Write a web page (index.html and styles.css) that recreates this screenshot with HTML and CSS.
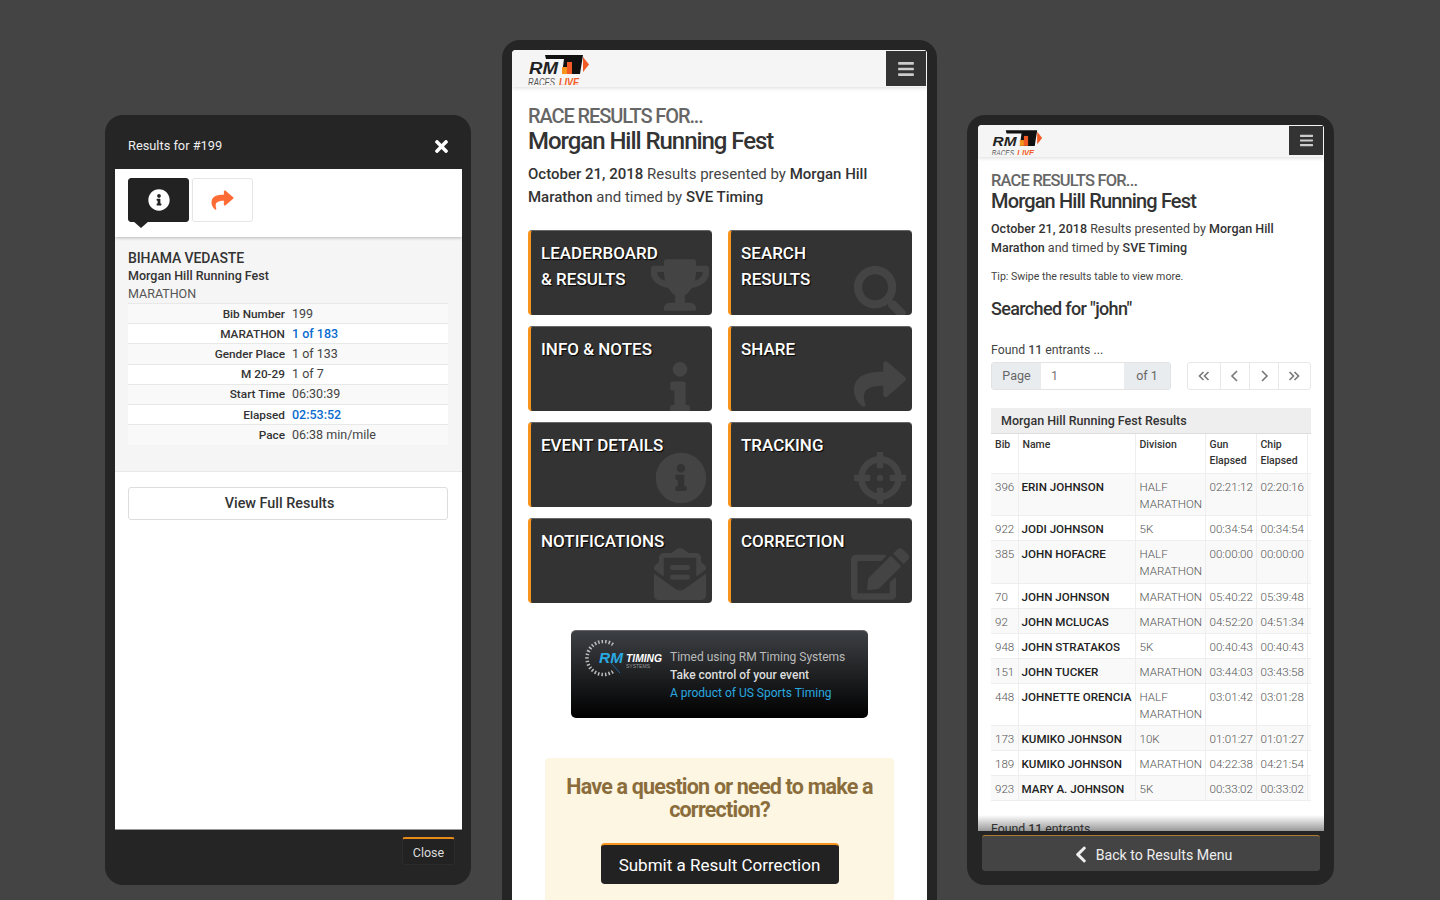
FILE: index.html
```html
<!DOCTYPE html>
<html lang="en">
<head>
  <meta charset="UTF-8" />
  <title>RM Races Live - Morgan Hill Running Fest</title>
  <link rel="stylesheet" href="styles.css">
</head>
<body>
  <svg class="sprites" aria-hidden="true">
    <symbol id="i-share" viewBox="0 0 512 512"><path d="M503.691 189.836L327.687 37.851C312.281 24.546 288 35.347 288 56.015v80.053C127.371 137.907 0 170.1 0 322.326c0 61.441 39.581 122.309 83.333 154.132 13.653 9.931 33.111-2.533 28.077-18.631C66.066 312.814 132.917 274.316 288 272.085V360c0 20.7 24.3 31.453 39.687 18.164l176.004-152c11.071-9.562 11.086-26.753 0-36.328z"/></symbol>
    <symbol id="i-circle" viewBox="0 0 512 512"><path d="M256 8C119.043 8 8 119.083 8 256c0 136.997 111.043 248 248 248s248-111.003 248-248C504 119.083 392.957 8 256 8zm0 110c23.196 0 42 18.804 42 42s-18.804 42-42 42-42-18.804-42-42 18.804-42 42-42zm56 254c0 6.627-5.373 12-12 12h-88c-6.627 0-12-5.373-12-12v-24c0-6.627 5.373-12 12-12h12v-64h-12c-6.627 0-12-5.373-12-12v-24c0-6.627 5.373-12 12-12h64c6.627 0 12 5.373 12 12v100h12c6.627 0 12 5.373 12 12v24z"/></symbol>
    <symbol id="i-info" viewBox="0 0 192 512"><path d="M20 424.229h20V279.771H20c-11.046 0-20-8.954-20-20V212c0-11.046 8.954-20 20-20h112c11.046 0 20 8.954 20 20v212.229h20c11.046 0 20 8.954 20 20V492c0 11.046-8.954 20-20 20H20c-11.046 0-20-8.954-20-20v-47.771c0-11.046 8.954-20 20-20zM96 0C56.235 0 24 32.235 24 72s32.235 72 72 72 72-32.235 72-72S135.764 0 96 0z"/></symbol>
    <symbol id="i-search" viewBox="0 0 512 512"><path d="M505 442.7L405.3 343c-4.5-4.5-10.6-7-17-7H372c27.6-35.3 44-79.7 44-128C416 93.1 322.9 0 208 0S0 93.1 0 208s93.1 208 208 208c48.3 0 92.7-16.4 128-44v16.3c0 6.4 2.5 12.5 7 17l99.7 99.7c9.4 9.4 24.6 9.4 33.9 0l28.3-28.3c9.4-9.4 9.4-24.6.1-34zM208 336c-70.7 0-128-57.2-128-128 0-70.7 57.2-128 128-128 70.7 0 128 57.2 128 128 0 70.7-57.2 128-128 128z"/></symbol>
    <symbol id="i-trophy" viewBox="0 0 576 512"><path d="M552 64H448V24c0-13.3-10.7-24-24-24H152c-13.3 0-24 10.7-24 24v40H24C10.7 64 0 74.7 0 88v56c0 35.7 22.5 72.4 61.9 100.7 31.5 22.7 69.8 37.1 110 41.7C203.3 338.5 240 360 240 360v72h-48c-35.3 0-64 20.7-64 56v12c0 6.6 5.4 12 12 12h296c6.6 0 12-5.4 12-12v-12c0-35.3-28.7-56-64-56h-48v-72s36.7-21.5 68.1-73.6c40.3-4.6 78.7-19 110-41.7 39.3-28.3 61.9-65 61.9-100.7V88c0-13.3-10.7-24-24-24zM99.3 192.8C74.9 175.2 64 155.6 64 144v-16h64.2c1 32.6 5.8 61.2 12.8 86.2-15.1-5.2-29.2-12.4-41.7-21.4zM512 144c0 16.1-17.7 36.1-35.3 48.8-12.5 9-26.7 16.2-41.8 21.4 7-25 11.8-53.6 12.8-86.2H512v16z"/></symbol>
    <symbol id="i-target" viewBox="0 0 512 512"><path d="M500 224h-30.364C455.724 130.325 381.675 56.276 288 42.364V12c0-6.627-5.373-12-12-12h-40c-6.627 0-12 5.373-12 12v30.364C130.325 56.276 56.276 130.325 42.364 224H12c-6.627 0-12 5.373-12 12v40c0 6.627 5.373 12 12 12h30.364C56.276 381.675 130.325 455.724 224 469.636V500c0 6.627 5.373 12 12 12h40c6.627 0 12-5.373 12-12v-30.364C381.675 455.724 455.724 381.675 469.636 288H500c6.627 0 12-5.373 12-12v-40c0-6.627-5.373-12-12-12zM288 404.634V364c0-6.627-5.373-12-12-12h-40c-6.627 0-12 5.373-12 12v40.634C165.826 392.232 119.783 346.243 107.366 288H148c6.627 0 12-5.373 12-12v-40c0-6.627-5.373-12-12-12h-40.634C119.768 165.826 165.757 119.783 224 107.366V148c0 6.627 5.373 12 12 12h40c6.627 0 12-5.373 12-12v-40.634C346.174 119.768 392.217 165.757 404.634 224H364c-6.627 0-12 5.373-12 12v40c0 6.627 5.373 12 12 12h40.634C392.232 346.174 346.243 392.217 288 404.634zM288 256c0 17.673-14.327 32-32 32s-32-14.327-32-32c0-17.673 14.327-32 32-32s32 14.327 32 32z"/></symbol>
    <symbol id="i-edit" viewBox="0 0 576 512"><path d="M402.6 83.2l90.2 90.2c3.8 3.8 3.8 10 0 13.8L274.4 405.6l-92.8 10.3c-12.4 1.4-22.9-9.1-21.5-21.5l10.3-92.8L388.8 83.2c3.8-3.8 10-3.8 13.8 0zm162-22.9l-48.8-48.8c-15.2-15.2-39.9-15.2-55.2 0l-35.4 35.4c-3.8 3.8-3.8 10 0 13.8l90.2 90.2c3.8 3.8 10 3.8 13.8 0l35.4-35.4c15.2-15.3 15.2-40 0-55.2zM384 346.2V448H64V128h229.8c3.2 0 6.2-1.3 8.5-3.5l40-40c7.6-7.6 2.2-20.5-8.5-20.5H48C21.5 64 0 85.5 0 112v352c0 26.5 21.5 48 48 48h352c26.5 0 48-21.5 48-48V306.2c0-10.7-12.9-16-20.5-8.5l-40 40c-2.2 2.3-3.5 5.3-3.5 8.5z"/></symbol>
    <symbol id="i-mail" viewBox="0 0 512 512"><path d="M176 216h160c8.84 0 16-7.16 16-16v-16c0-8.84-7.16-16-16-16H176c-8.84 0-16 7.16-16 16v16c0 8.84 7.16 16 16 16zm-16 80c0 8.84 7.16 16 16 16h160c8.84 0 16-7.16 16-16v-16c0-8.84-7.16-16-16-16H176c-8.84 0-16 7.16-16 16v16zm96 121.13c-16.42 0-32.84-5.06-46.86-15.19L0 250.86V464c0 26.51 21.49 48 48 48h416c26.51 0 48-21.49 48-48V250.86L302.86 401.94c-14.02 10.12-30.44 15.19-46.86 15.19zm237.61-254.18c-8.85-6.94-17.24-13.47-29.61-22.81V96c0-26.51-21.49-48-48-48h-77.55c-3.04-2.2-5.87-4.26-9.04-6.56C312.6 29.17 279.2-.35 256 0c-23.2-.35-56.59 29.17-73.41 41.44-3.17 2.3-6 4.36-9.04 6.56H96c-26.51 0-48 21.49-48 48v44.14c-12.37 9.33-20.76 15.87-29.61 22.81A47.995 47.995 0 0 0 0 200.72v10.65l96 69.35V96h320v184.72l96-69.35v-10.65c0-14.74-6.78-28.67-18.39-37.77z"/></symbol>
    <symbol id="i-bars" viewBox="0 0 448 512"><path d="M16 132h416c8.837 0 16-7.163 16-16V76c0-8.837-7.163-16-16-16H16C7.163 60 0 67.163 0 76v40c0 8.837 7.163 16 16 16zm0 160h416c8.837 0 16-7.163 16-16v-40c0-8.837-7.163-16-16-16H16c-8.837 0-16 7.163-16 16v40c0 8.837 7.163 16 16 16zm0 160h416c8.837 0 16-7.163 16-16v-40c0-8.837-7.163-16-16-16H16c-8.837 0-16 7.163-16 16v40c0 8.837 7.163 16 16 16z"/></symbol>
  </svg>

  <!-- left phone: results modal -->
  <section class="device device-modal">
    <header class="modal-head">
      <span>Results for #199</span>
      <svg class="modal-x" viewBox="0 0 352 512"><path d="M242.72 256l100.07-100.07c12.28-12.28 12.28-32.19 0-44.48l-22.24-22.24c-12.28-12.28-32.19-12.28-44.48 0L176 189.28 75.93 89.21c-12.28-12.28-32.19-12.28-44.48 0L9.21 111.45c-12.28 12.28-12.28 32.19 0 44.48L109.28 256 9.21 356.07c-12.28 12.28-12.28 32.19 0 44.48l22.24 22.24c12.28 12.28 32.2 12.28 44.48 0L176 322.72l100.07 100.07c12.28 12.28 32.2 12.28 44.48 0l22.24-22.24c12.28-12.28 12.28-32.19 0-44.48L242.72 256z"/></svg>
    </header>
    <div class="screen modal-body">
      <div class="tabs">
        <div class="tab tab-on"><svg class="tab-icon"><use href="#i-circle"/></svg></div>
        <div class="tab"><svg class="tab-icon tab-share"><use href="#i-share"/></svg></div>
      </div>
      <div class="result">
        <div class="result-name">BIHAMA VEDASTE</div>
        <div class="result-event">Morgan Hill Running Fest</div>
        <div class="result-div">MARATHON</div>
        <table class="result-table">
          <tr><th>Bib Number</th><td>199</td></tr>
          <tr><th>MARATHON</th><td class="blue">1 of 183</td></tr>
          <tr><th>Gender Place</th><td>1 of 133</td></tr>
          <tr><th>M 20-29</th><td>1 of 7</td></tr>
          <tr><th>Start Time</th><td>06:30:39</td></tr>
          <tr><th>Elapsed</th><td class="blue">02:53:52</td></tr>
          <tr><th>Pace</th><td>06:38 min/mile</td></tr>
        </table>
      </div>
      <button class="full-btn">View Full Results</button>
    </div>
    <footer class="modal-foot">
      <button class="close-btn">Close</button>
    </footer>
  </section>

  <!-- middle phone: results menu -->
  <section class="device device-menu">
    <div class="screen">
      <div class="topbar">
        <svg class="logo" viewBox="0 0 64 35">
          <polygon points="19,5 57,5 54,24 36,24 38,9 20,9" fill="#111"/>
          <rect x="36" y="17" width="5" height="7" fill="#f7941d"/>
          <rect x="41" y="12" width="5" height="12" fill="#f15a24"/>
          <polygon points="57,7 63,14.5 57,22" fill="#f15a24"/>
          <text x="3" y="24" class="logo-rm" textLength="29" lengthAdjust="spacingAndGlyphs">RM</text>
          <text x="2" y="36" class="logo-races" textLength="27" lengthAdjust="spacingAndGlyphs">RACES</text>
          <text x="33" y="36" class="logo-live" textLength="20" lengthAdjust="spacingAndGlyphs">LIVE</text>
        </svg>
        <div class="burger"><svg class="burger-icon"><use href="#i-bars"/></svg></div>
      </div>
      <div class="page">
        <h2 class="race-for">RACE RESULTS FOR...</h2>
        <h1 class="race-name">Morgan Hill Running Fest</h1>
        <p class="race-info"><b>October 21, 2018</b> Results presented by <b>Morgan Hill</b> <b>Marathon</b> and timed by <b>SVE Timing</b></p>

        <div class="tiles">
          <a class="tile">LEADERBOARD<br>&amp; RESULTS<svg class="tile-icon ti-trophy"><use href="#i-trophy"/></svg></a>
          <a class="tile">SEARCH<br>RESULTS<svg class="tile-icon ti-search"><use href="#i-search"/></svg></a>
          <a class="tile">INFO &amp; NOTES<svg class="tile-icon ti-info"><use href="#i-info"/></svg></a>
          <a class="tile">SHARE<svg class="tile-icon ti-share"><use href="#i-share"/></svg></a>
          <a class="tile">EVENT DETAILS<svg class="tile-icon ti-circle"><use href="#i-circle"/></svg></a>
          <a class="tile">TRACKING<svg class="tile-icon ti-target"><use href="#i-target"/></svg></a>
          <a class="tile">NOTIFICATIONS<svg class="tile-icon ti-mail"><use href="#i-mail"/></svg></a>
          <a class="tile">CORRECTION<svg class="tile-icon ti-edit"><use href="#i-edit"/></svg></a>
        </div>

        <div class="banner">
          <svg class="banner-logo" viewBox="0 0 80 40">
            <path d="M28 4.5 A16.5 16.5 0 1 0 28 31.5" class="dial"/>
            <line x1="26" y1="23" x2="35" y2="33" class="needle"/>
            <text x="14" y="23" class="rm-blue" textLength="24" lengthAdjust="spacingAndGlyphs">RM</text>
            <text x="41" y="22" class="rm-timing" textLength="36" lengthAdjust="spacingAndGlyphs">TIMING</text>
            <text x="41" y="27.5" class="rm-systems" textLength="24" lengthAdjust="spacingAndGlyphs">SYSTEMS</text>
          </svg>
          <div class="banner-text">
            <div>Timed using RM Timing Systems</div>
            <div class="banner-bold">Take control of your event</div>
            <div class="banner-link">A product of US Sports Timing</div>
          </div>
        </div>

        <div class="question">
          <h3>Have a question or need to make a correction?</h3>
          <button class="submit-btn">Submit a Result Correction</button>
        </div>
      </div>
    </div>
  </section>

  <!-- right phone: search results -->
  <section class="device device-search">
    <div class="screen search-screen">
      <div class="topbar topbar-small">
        <svg class="logo logo-small" viewBox="0 0 64 35">
          <polygon points="19,5 57,5 54,24 36,24 38,9 20,9" fill="#111"/>
          <rect x="36" y="17" width="5" height="7" fill="#f7941d"/>
          <rect x="41" y="12" width="5" height="12" fill="#f15a24"/>
          <polygon points="57,7 63,14.5 57,22" fill="#f15a24"/>
          <text x="3" y="24" class="logo-rm" textLength="29" lengthAdjust="spacingAndGlyphs">RM</text>
          <text x="2" y="36" class="logo-races" textLength="27" lengthAdjust="spacingAndGlyphs">RACES</text>
          <text x="33" y="36" class="logo-live" textLength="20" lengthAdjust="spacingAndGlyphs">LIVE</text>
        </svg>
        <div class="burger burger-small"><svg class="burger-icon burger-icon-small"><use href="#i-bars"/></svg></div>
      </div>
      <div class="page page-small">
        <h2 class="race-for">RACE RESULTS FOR...</h2>
        <h1 class="race-name">Morgan Hill Running Fest</h1>
        <p class="race-info"><b>October 21, 2018</b> Results presented by <b>Morgan Hill</b> <b>Marathon</b> and timed by <b>SVE Timing</b></p>
        <p class="tip">Tip: Swipe the results table to view more.</p>
        <h3 class="searched">Searched for "john"</h3>
        <p class="found">Found <b>11</b> entrants ...</p>

        <div class="pager">
          <div class="page-group">
            <span class="page-addon">Page</span>
            <span class="page-input">1</span>
            <span class="page-addon page-of">of 1</span>
          </div>
          <div class="page-nav">
            <span class="nav-btn nav-wide"><svg viewBox="0 0 14 12"><path d="M6.5 2 L2.5 6 L6.5 10 M11.5 2 L7.5 6 L11.5 10"/></svg></span>
            <span class="nav-btn"><svg viewBox="0 0 14 12"><path d="M9 1 L4 6 L9 11"/></svg></span>
            <span class="nav-btn"><svg viewBox="0 0 14 12"><path d="M5 1 L10 6 L5 11"/></svg></span>
            <span class="nav-btn nav-wide"><svg viewBox="0 0 14 12"><path d="M2.5 2 L6.5 6 L2.5 10 M7.5 2 L11.5 6 L7.5 10"/></svg></span>
          </div>
        </div>

        <div class="table-title">Morgan Hill Running Fest Results</div>
        <table class="search-table">
          <colgroup><col class="c-bib"><col class="c-name"><col class="c-div"><col class="c-time"><col class="c-time"><col class="c-rest"></colgroup>
          <thead>
            <tr><th>Bib</th><th>Name</th><th>Division</th><th>Gun Elapsed</th><th>Chip Elapsed</th><th></th></tr>
          </thead>
          <tbody>
            <tr><td>396</td><td class="nm">ERIN JOHNSON</td><td class="two">HALF MARATHON</td><td>02:21:12</td><td>02:20:16</td><td></td></tr>
            <tr><td>922</td><td class="nm">JODI JOHNSON</td><td>5K</td><td>00:34:54</td><td>00:34:54</td><td></td></tr>
            <tr><td>385</td><td class="nm">JOHN HOFACRE</td><td class="two">HALF MARATHON</td><td>00:00:00</td><td>00:00:00</td><td></td></tr>
            <tr><td>70</td><td class="nm">JOHN JOHNSON</td><td>MARATHON</td><td>05:40:22</td><td>05:39:48</td><td></td></tr>
            <tr><td>92</td><td class="nm">JOHN MCLUCAS</td><td>MARATHON</td><td>04:52:20</td><td>04:51:34</td><td></td></tr>
            <tr><td>948</td><td class="nm">JOHN STRATAKOS</td><td>5K</td><td>00:40:43</td><td>00:40:43</td><td></td></tr>
            <tr><td>151</td><td class="nm">JOHN TUCKER</td><td>MARATHON</td><td>03:44:03</td><td>03:43:58</td><td></td></tr>
            <tr><td>448</td><td class="nm">JOHNETTE ORENCIA</td><td class="two">HALF MARATHON</td><td>03:01:42</td><td>03:01:28</td><td></td></tr>
            <tr><td>173</td><td class="nm">KUMIKO JOHNSON</td><td>10K</td><td>01:01:27</td><td>01:01:27</td><td></td></tr>
            <tr><td>189</td><td class="nm">KUMIKO JOHNSON</td><td>MARATHON</td><td>04:22:38</td><td>04:21:54</td><td></td></tr>
            <tr><td>923</td><td class="nm">MARY A. JOHNSON</td><td>5K</td><td>00:33:02</td><td>00:33:02</td><td></td></tr>
          </tbody>
        </table>
        <p class="found found-end">Found <b>11</b> entrants ...</p>
      </div>
    </div>
    <footer class="search-foot">
      <button class="back-btn">
        <svg class="back-icon" viewBox="0 0 320 512"><path d="M34.52 239.03L228.87 44.69c9.37-9.37 24.57-9.37 33.94 0l22.67 22.67c9.36 9.36 9.37 24.52.04 33.9L131.49 256l154.02 154.75c9.34 9.38 9.32 24.54-.04 33.9l-22.67 22.67c-9.37 9.37-24.57 9.37-33.94 0L34.52 272.97c-9.37-9.37-9.37-24.57 0-33.94z"/></svg>
        Back to Results Menu
      </button>
    </footer>
  </section>
</body>
</html>
```

FILE: styles.css
```css
* {
  box-sizing: border-box;
}

html, body {
  margin: 0;
  height: 900px;
  overflow: hidden;
}

body {
  position: relative;
  background-color: #444;
  font-family: Roboto, 'Liberation Sans', sans-serif;
  color: #333;
}

h1, h2, h3, p {
  margin: 0;
}

button {
  font-family: inherit;
  cursor: pointer;
}

.sprites {
  position: absolute;
  width: 0;
  height: 0;
}

/* phones sit on a free canvas */
.device {
  position: absolute;
  background-color: #252525;
  border-radius: 18px;
  display: flex;
  flex-direction: column;
}

.device-modal {
  left: 105px;
  top: 115px;
  width: 366px;
  height: 770px;
  padding: 0 9px 0 10px;
}

.device-menu {
  left: 502px;
  top: 40px;
  width: 435px;
  height: 900px;
  padding: 10px 10px 0 10px;
}

.device-search {
  left: 967px;
  top: 115px;
  width: 367px;
  height: 770px;
  padding: 10px 10px 0 11px;
}

.screen {
  background-color: #fff;
  flex: 1;
  min-height: 0;
  overflow: hidden;
  border-radius: 4px 4px 0 0;
}

/* top bar + logo */
.topbar {
  height: 37px;
  background-color: #f5f5f5;
  box-shadow: 0 1px 4px rgba(0,0,0,0.15);
  display: flex;
  justify-content: space-between;
  position: relative;
}

.logo {
  width: 64px;
  height: 35px;
  margin-left: 14px;
}

.logo-rm {
  font: italic bold 16px 'Liberation Sans', sans-serif;
  fill: #222;
}

.logo-races {
  font: italic 11px 'Liberation Sans', sans-serif;
  fill: #555;
}

.logo-live {
  font: italic bold 11px 'Liberation Sans', sans-serif;
  fill: #f15a24;
}

.burger {
  width: 40px;
  height: 35px;
  margin: 1px 1px 0 0;
  background-color: #333;
  display: flex;
  align-items: center;
  justify-content: center;
}

.burger-icon {
  width: 16px;
  height: 18px;
  fill: #ccc;
}

.page {
  padding: 18px 16px 0 16px;
}

.race-for {
  font-size: 20px;
  line-height: 22px;
  font-weight: 500;
  letter-spacing: -1.1px;
  color: #666;
}

.race-name {
  margin-top: 1px;
  font-size: 24px;
  line-height: 26px;
  font-weight: 500;
  letter-spacing: -1.05px;
  color: #333;
}

.race-info {
  margin-top: 9px;
  font-size: 15px;
  line-height: 22.5px;
  color: #444;
}

.race-info b {
  font-weight: 500;
  color: #333;
}

/* menu tiles */
.tiles {
  margin-top: 22px;
  display: grid;
  grid-template-columns: 184px 184px;
  grid-auto-rows: 85px;
  column-gap: 16px;
  row-gap: 11px;
}

.tile {
  position: relative;
  overflow: hidden;
  background-color: #333;
  border-left: 3px solid #f7941d;
  border-top: 1px solid #666;
  border-radius: 4px;
  padding: 9px 10px 0 10px;
  font-size: 17px;
  line-height: 26px;
  font-weight: 500;
  color: #fff;
  text-shadow: 1px 1px 1px #000;
}

.tile-icon {
  position: absolute;
  fill: #444;
  width: 52px;
  height: 52px;
}

.ti-trophy { width: 58px; left: 120px; top: 28px; }
.ti-search { left: 123px; top: 35px; }
.ti-info   { width: 20px; left: 139px; top: 35px; }
.ti-share  { left: 123px; top: 31px; }
.ti-circle { left: 124px; top: 29px; }
.ti-target { left: 123px; top: 29px; }
.ti-mail   { left: 123px; top: 29px; }
.ti-edit   { width: 58px; left: 120px; top: 29px; }

/* timing banner */
.banner {
  width: 297px;
  height: 88px;
  margin: 27px auto 0 auto;
  border-radius: 5px;
  background: linear-gradient(#3d4044, #000);
  border-top: 1px solid #666;
  display: flex;
  align-items: flex-start;
  padding: 9px 0 0 14px;
}

.banner-logo {
  width: 80px;
  height: 40px;
  flex-shrink: 0;
  margin-right: 5px;
}

.dial {
  fill: none;
  stroke: #bbb;
  stroke-width: 3.5;
  stroke-dasharray: 1.5 2;
}

.needle {
  stroke: #1c75bc;
  stroke-width: 0.8;
}

.rm-blue {
  font: italic bold 15px 'Liberation Sans', sans-serif;
  fill: #29a9e0;
}

.rm-timing {
  font: italic bold 10px 'Liberation Sans', sans-serif;
  fill: #fff;
}

.rm-systems {
  font: 4.5px 'Liberation Sans', sans-serif;
  fill: #999;
}

.banner-text {
  font-size: 12px;
  line-height: 18px;
  color: #bbb;
  margin-top: 8px;
}

.banner-bold {
  color: #ddd;
  font-weight: 500;
}

.banner-link {
  color: #29a9e0;
}

/* correction box */
.question {
  margin: 40px 17px 0 17px;
  padding: 17px 10px 0 10px;
  height: 200px;
  background-color: #fcf6e3;
  border-radius: 4px;
  text-align: center;
}

.question h3 {
  font-size: 21.5px;
  line-height: 23px;
  font-weight: 700;
  letter-spacing: -0.8px;
  color: #8a6d3b;
}

.submit-btn {
  margin-top: 22px;
  width: 238px;
  height: 41px;
  background-color: #222;
  color: #fff;
  font-size: 17px;
  border: 0;
  border-top: 2px solid #f7941d;
  border-radius: 4px;
}

/* left modal */
.modal-head {
  height: 54px;
  display: flex;
  align-items: center;
  justify-content: space-between;
  padding: 6px 14px 0 13px;
  color: #eee;
  font-size: 12.8px;
}

.modal-x {
  width: 13px;
  height: 19px;
  fill: #fff;
  margin-top: 2px;
}

.modal-body {
  border-radius: 0;
  border-bottom: 1px solid #999;
}

.tabs {
  height: 68px;
  padding: 9px 13px 0 13px;
  display: flex;
  gap: 3px;
  position: relative;
  box-shadow: 0 1px 3px rgba(0,0,0,0.25);
}

.tab {
  position: relative;
  width: 61px;
  height: 44px;
  border: 1px solid #e5e5e5;
  border-radius: 3px;
  display: flex;
  align-items: center;
  justify-content: center;
}

.tab-on {
  background-color: #222;
  border-color: #222;
}

.tab-on::after {
  content: "";
  position: absolute;
  left: 4px;
  top: 42px;
  border-left: 8px solid transparent;
  border-right: 8px solid transparent;
  border-top: 7px solid #222;
}

.tab-icon {
  width: 22px;
  height: 22px;
  fill: #fff;
}

.tab-share {
  width: 23px;
  fill: #ff6b35;
}

.result {
  height: 235px;
  background-color: #f5f5f5;
  border-bottom: 1px solid #e8e8e8;
  padding: 12px 14px 0 13px;
  font-size: 12.5px;
  line-height: 18px;
}

.result-name {
  font-size: 14px;
  font-weight: 500;
  letter-spacing: -0.1px;
  color: #333;
}

.result-event {
  font-weight: 500;
  color: #333;
}

.result-div {
  color: #555;
}

.result-table {
  width: 100%;
  border-collapse: collapse;
  table-layout: fixed;
  font-size: 12.5px;
}

.result-table tr {
  height: 20.2px;
  border-top: 1px solid #e8e8e8;
}

.result-table tr:nth-child(odd) {
  background-color: #f9f9f9;
}

.result-table tr:nth-child(even) {
  background-color: #fff;
}

.result-table th {
  width: 164px;
  padding: 0 7px 0 0;
  text-align: right;
  font-size: 11.8px;
  font-weight: 500;
  color: #333;
}

.result-table td {
  padding: 0;
  color: #444;
}

.result-table td.blue {
  color: #0a6ccf;
  font-weight: 500;
}

.full-btn {
  display: block;
  width: 320px;
  height: 33px;
  margin: 15px 0 0 13px;
  background-color: #fff;
  border: 1px solid #ddd;
  border-radius: 3px;
  font-size: 14.4px;
  font-weight: 500;
  color: #333;
  padding-right: 23px;
}

.modal-foot {
  height: 55px;
  display: flex;
  justify-content: flex-end;
  padding: 7px 7px 0 0;
}

.close-btn {
  width: 53px;
  height: 28px;
  background-color: #222;
  color: #ddd;
  font-size: 12.5px;
  border: 1px solid #2c2c2c;
  border-top: 2px solid #e68a1a;
  border-radius: 3px;
  padding: 2px 0 0 0;
}

/* right phone */
.search-screen {
  position: relative;
  border-radius: 4px 4px 0 0;
}

.search-screen::after {
  content: "";
  position: absolute;
  left: 0;
  right: 0;
  bottom: 0;
  height: 16px;
  background: linear-gradient(rgba(0,0,0,0), rgba(0,0,0,0.4));
}

.topbar-small {
  height: 32px;
}

.logo-small {
  width: 53px;
  height: 29px;
  margin-left: 12px;
  margin-top: 1px;
}

.burger-small {
  width: 34px;
  height: 29px;
}

.burger-icon-small {
  width: 13px;
  height: 15px;
}

.page-small {
  padding: 15px 13px 0 13px;
}

.page-small .race-for {
  font-size: 16.5px;
  line-height: 18px;
  letter-spacing: -0.8px;
}

.page-small .race-name {
  margin-top: 0;
  font-size: 20px;
  line-height: 22px;
  letter-spacing: -0.85px;
}

.page-small .race-info {
  margin-top: 7px;
  font-size: 12.5px;
  line-height: 19px;
}

.tip {
  margin-top: 12px;
  font-size: 10.6px;
  line-height: 15px;
  color: #444;
}

.searched {
  margin-top: 14px;
  font-size: 18px;
  line-height: 22px;
  font-weight: 500;
  letter-spacing: -0.65px;
  color: #333;
}

.found {
  margin-top: 22px;
  font-size: 12.3px;
  line-height: 17px;
  color: #444;
}

.found b {
  font-weight: 500;
}

.found-end {
  margin-top: 20px;
}

.pager {
  margin-top: 3px;
  display: flex;
  justify-content: space-between;
  font-size: 12.5px;
  color: #666;
}

.page-group {
  display: flex;
  width: 180px;
  height: 28px;
  border: 1px solid #e3e3e3;
  border-radius: 3px;
  line-height: 26px;
}

.page-addon {
  width: 49px;
  text-align: center;
  background-color: #e9ecef;
}

.page-of {
  width: 46px;
}

.page-input {
  flex: 1;
  padding-left: 10px;
  color: #777;
}

.page-nav {
  display: flex;
  width: 124px;
  height: 28px;
  border: 1px solid #e8e8e8;
  border-radius: 3px;
}

.nav-btn {
  width: 29px;
  display: flex;
  align-items: center;
  justify-content: center;
  border-left: 1px solid #e8e8e8;
}

.nav-btn:first-child {
  border-left: 0;
}

.nav-wide {
  flex: 1;
}

.nav-btn svg {
  width: 14px;
  height: 12px;
  fill: none;
  stroke: #777;
  stroke-width: 1.6;
}

.table-title {
  margin-top: 18px;
  height: 26px;
  padding-left: 10px;
  background-color: #eee;
  border-bottom: 1px solid #ddd;
  font-size: 12.5px;
  line-height: 26px;
  font-weight: 500;
  color: #333;
}

.search-table {
  width: 320px;
  border-collapse: collapse;
  table-layout: fixed;
}

.c-bib { width: 27px; }
.c-name { width: 117px; }
.c-div { width: 70px; }
.c-time { width: 51px; }
.c-rest { width: 4px; }

.search-table th {
  height: 39px;
  padding: 3px 4px 0 4px;
  vertical-align: top;
  text-align: left;
  font-size: 10.5px;
  line-height: 16px;
  font-weight: 500;
  color: #333;
  border-left: 1px solid #eee;
  border-bottom: 1px solid #eee;
}

.search-table th:first-child,
.search-table td:first-child {
  border-left: 0;
}

.search-table th:last-child,
.search-table td:last-child {
  padding: 0;
}

.search-table td {
  padding: 5px 0 2px 4px;
  vertical-align: top;
  font-size: 11.6px;
  line-height: 17px;
  font-weight: 300;
  color: #555;
  border-left: 1px solid #eee;
  border-bottom: 1px solid #eee;
}

.search-table td.two {
  line-height: 17.25px;
}

.search-table tbody tr:nth-child(odd) {
  background-color: #f9f9f9;
}

.search-table td.nm {
  padding-left: 3px;
  font-weight: 500;
  color: #222;
  white-space: nowrap;
}

.search-foot {
  height: 54px;
  padding: 4px 4px 0 4px;
  flex-shrink: 0;
}

.back-btn {
  width: 338px;
  height: 36px;
  background-color: #444;
  color: #eee;
  border: 0;
  border-top: 1px solid #b07a30;
  border-radius: 3px;
  font-size: 14.2px;
  display: flex;
  align-items: center;
  justify-content: center;
  gap: 9px;
  padding: 2px 0 0 5px;
}

.back-icon {
  width: 12px;
  height: 19px;
  fill: #eee;
}
```
